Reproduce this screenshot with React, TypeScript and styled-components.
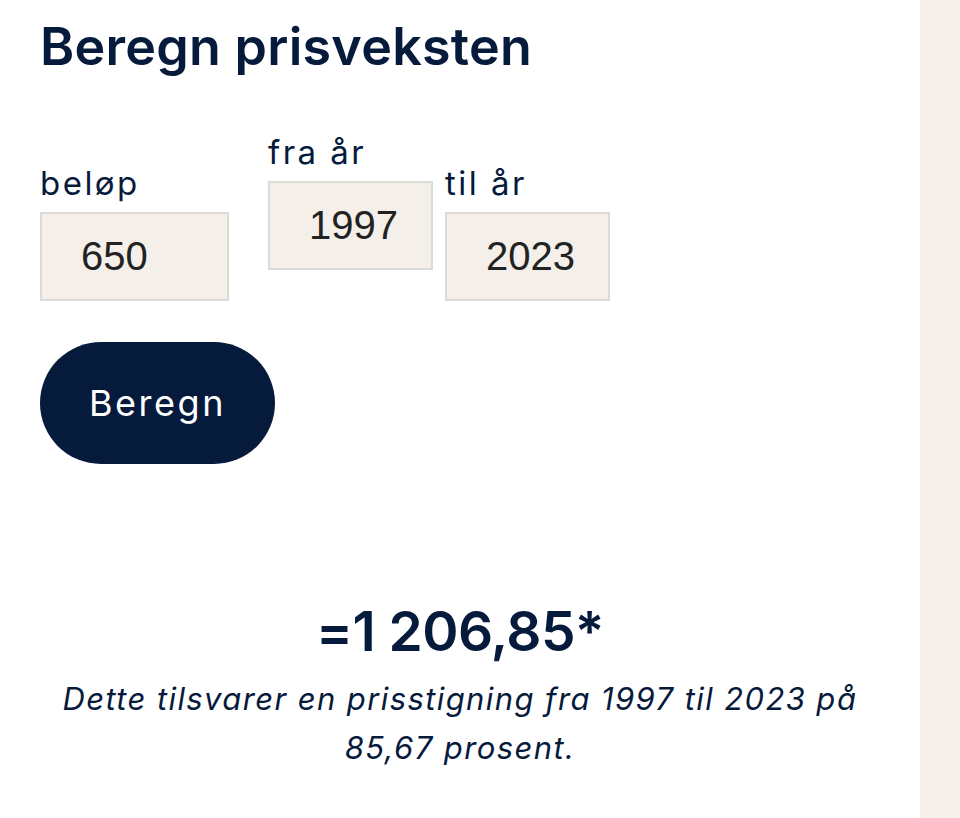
import React, { FunctionComponent } from "react";
import styled, { createGlobalStyle } from "styled-components";

const colors = {
  navy: "#061a3c",
  sand: "#f4f0e9",
  border: "#dcdad6",
  inputText: "#222222",
};

const GlobalStyle = createGlobalStyle`
  html, body {
    margin: 0;
    padding: 0;
    background: ${colors.sand};
  }
  body {
    font-family: Inter, "Noto Sans", sans-serif;
    color: ${colors.navy};
  }
`;

const fields = [
  { label: "beløp", value: "650", raised: false, width: 189, gapAfter: 39 },
  { label: "fra år", value: "1997", raised: true, width: 165, gapAfter: 12 },
  { label: "til år", value: "2023", raised: false, width: 165, gapAfter: 0 },
];

const App: FunctionComponent = () => {
  return (
    <>
      <GlobalStyle />
      <Page>
        <Panel>
          <Title>Beregn prisveksten</Title>

          <Form onSubmit={(e) => e.preventDefault()}>
            <FieldRow>
              {fields.map((f) => (
                <Field key={f.label} $raised={f.raised} $gapAfter={f.gapAfter}>
                  <Label>{f.label}</Label>
                  <Input $width={f.width} defaultValue={f.value} />
                </Field>
              ))}
            </FieldRow>

            <SubmitButton type="submit">Beregn</SubmitButton>
          </Form>

          <Result>
            <Amount>=1 206,85*</Amount>
            <Explanation>
              Dette tilsvarer en prisstigning fra 1997 til 2023 på
              <br />
              85,67 prosent.
            </Explanation>
          </Result>
        </Panel>
        <Aside />
      </Page>
    </>
  );
};

export default App;

const Page = styled.div`
  display: flex;
  min-height: 818px;
`;

const Panel = styled.main`
  width: 920px;
  box-sizing: border-box;
  background: #ffffff;
  padding: 13px 40px 40px;
`;

const Aside = styled.aside`
  flex: 1;
  background: ${colors.sand};
`;

const Title = styled.h1`
  margin: 0;
  font-size: 52px;
  line-height: 68px;
  font-weight: 600;
  letter-spacing: 0.005em;
  color: ${colors.navy};
`;

const Form = styled.form`
  display: flex;
  flex-direction: column;
  align-items: flex-start;
  margin-top: 52px;
`;

const FieldRow = styled.div`
  display: flex;
  align-items: flex-start;
`;

const Field = styled.label<{ $raised: boolean; $gapAfter: number }>`
  display: flex;
  flex-direction: column;
  margin-top: ${(p) => (p.$raised ? "0" : "31px")};
  margin-right: ${(p) => p.$gapAfter}px;
`;

const Label = styled.span`
  font-size: 33px;
  line-height: 38px;
  letter-spacing: 0.075em;
  color: ${colors.navy};
  margin-bottom: 10px;
`;

const Input = styled.input<{ $width: number }>`
  width: ${(p) => p.$width}px;
  height: 89px;
  box-sizing: border-box;
  padding: 0 0 0 39px;
  border: 2px solid ${colors.border};
  background: ${colors.sand};
  font-family: "Liberation Sans", Arial, sans-serif;
  font-size: 40px;
  color: ${colors.inputText};
  outline: none;
`;

const SubmitButton = styled.button`
  margin-top: 41px;
  width: 235px;
  height: 122px;
  border: none;
  border-radius: 61px;
  background: ${colors.navy};
  color: #ffffff;
  font-family: Inter, "Noto Sans", sans-serif;
  font-size: 36px;
  letter-spacing: 0.07em;
  cursor: pointer;
`;

const Result = styled.section`
  margin-top: 134px;
  text-align: center;
`;

const Amount = styled.div`
  font-size: 55px;
  line-height: 66px;
  font-weight: 600;
  letter-spacing: -0.01em;
  color: ${colors.navy};
`;

const Explanation = styled.p`
  margin: 10px 0 0;
  font-size: 31px;
  line-height: 49px;
  font-style: italic;
  letter-spacing: 0.045em;
  color: ${colors.navy};
`;
